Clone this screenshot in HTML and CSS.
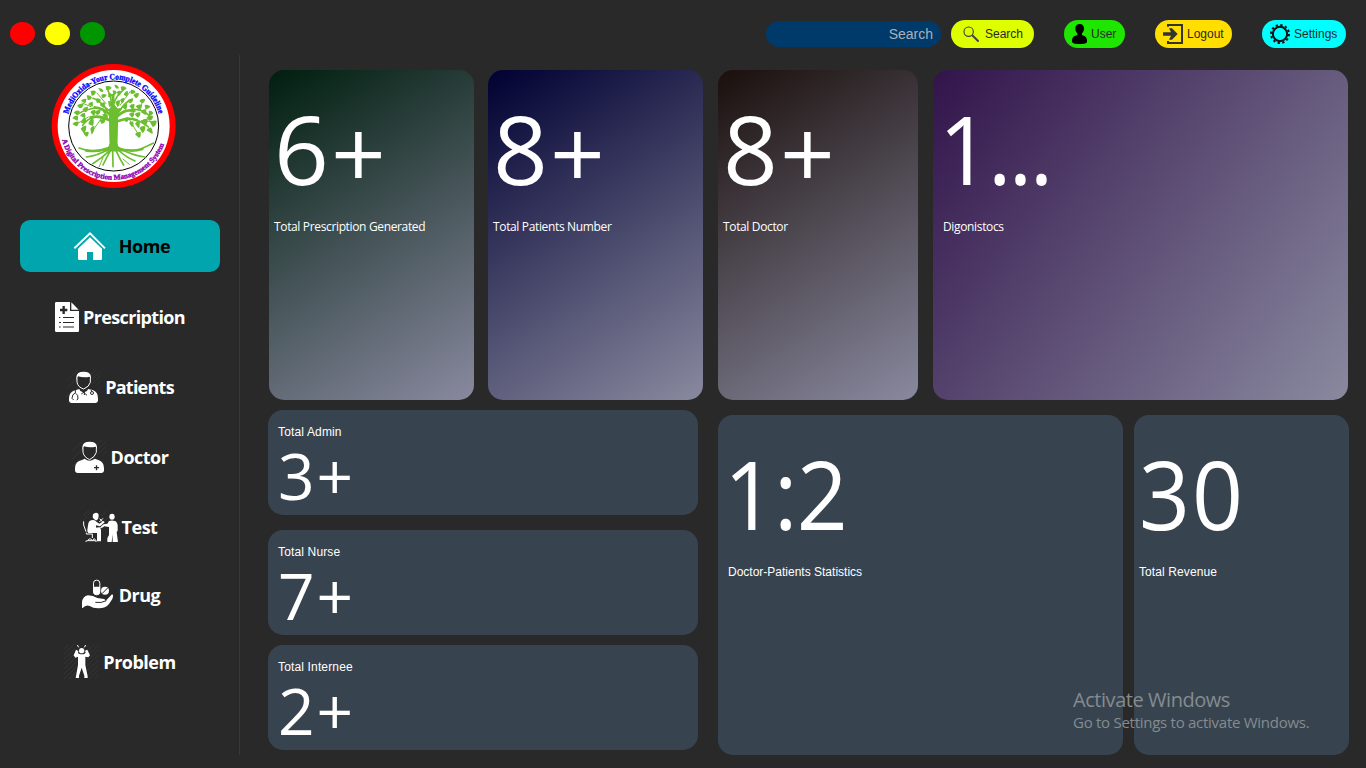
FILE: index.html
```html
<!DOCTYPE html>
<html lang="en">
<head>
<meta charset="utf-8">
<title>MediOxida</title>
<link rel="stylesheet" href="styles.css">
</head>
<body>
<div class="app">
  <header class="topbar">
    <div class="dots"><span class="dot red"></span><span class="dot yellow"></span><span class="dot green"></span></div>
    <div class="tools">
      <div class="field">Search</div>
      <button class="pill search"><svg width="16" height="16" viewBox="0 0 48 48" fill="none" stroke="#444"><circle cx="17" cy="17" r="14" stroke-width="3.5"/><path d="M27 27L47 47" stroke-width="6"/></svg><span>Search</span></button>
      <button class="pill user"><svg width="15" height="20" viewBox="0 0 45 60" fill="#000"><path d="M23 0c9 0 13 5 13 14 0 9-6 16-13 16S10 23 10 14C10 5 14 0 23 0zM16 27h14v6l9 4q6 4 6 12v4q0 7-22 7T0 53v-4q0-8 6-12l10-4z"/></svg><span>User</span></button>
      <button class="pill logout"><svg width="20" height="20" viewBox="0 0 60 60" fill="none" stroke="#333"><path d="M15 8V3H57V57H15V51" stroke-width="6"/><path d="M0 25H24L18 13H27L44 30L27 47H18L24 35H0Z" fill="#333" stroke="none"/></svg><span>Logout</span></button>
      <button class="pill settings"><svg width="20" height="20" viewBox="0 0 60 60" fill="none" stroke="#111"><circle cx="30" cy="30" r="21.5" stroke-width="6"/><circle cx="30" cy="30" r="27" stroke-width="6" stroke-dasharray="7.1 7.037"/></svg><span>Settings</span></button>
    </div>
  </header>
  <aside class="sidebar">
    <svg class="logo" width="126" height="126" viewBox="32 24 378 378">
      <defs><path id="arcTop" d="M84.500 178A140 140 0 0 1 355.500 178"/><path id="arcBottom" d="M65 254A160 160 0 0 0 375 254"/></defs>
      <circle cx="220" cy="213" r="186" fill="red"/><circle cx="220" cy="213" r="168" fill="#fff"/><circle cx="220" cy="213" r="135" fill="none" stroke="#000" stroke-width="3"/>
      <text class="ring blue"><textPath href="#arcTop" textLength="367" lengthAdjust="spacingAndGlyphs">MediOxida-Your Complete Guideline</textPath></text>
      <text class="ring purple"><textPath href="#arcBottom" textLength="408" lengthAdjust="spacingAndGlyphs">A Digital Prescription Management System</textPath></text>
      <g fill="none" stroke="#6cbe30" stroke-linecap="round" stroke-linejoin="round">
        <path d="M207 170L209 265Q206 282 190 288H250Q231 280 230 264L232 185Q233 170 245 160L232 162 221 150V118H215V152L206 165 192 154Z" fill="#6cbe30" stroke-width="3"/>
        <path stroke-width="8" d="M210 180Q190 160 163 157M231 184Q255 160 282 168M208 196Q180 180 151 187M231 199Q265 185 290 196M203 280Q170 292 137 286M230 279Q270 293 306 282"/>
        <path stroke-width="5" d="M216 162Q213 125 200 100M219 150Q228 120 248 106M200 166Q183 139 158 130M236 171Q249 145 276 132M173 159Q140 160 111 178M269 165Q301 157 327 182M169 185Q140 190 127 211M278 193Q305 198 324 216M205 283Q170 303 138 306M209 286Q184 310 157 326M217 285L218 335M211 286Q197 310 188 330M227 286Q240 315 250 330M231 282Q255 306 284 318M235 279Q275 301 314 306M140 286L116 279M303 281L340 264"/>
        <path stroke-width="3" d="M197 146L170 114M239 151L270 109M152 155L125 144M300 166L306 139M144 186L107 208M303 197L341 200M190 180L158 226M265 190L292 235M188 308L176 336M248 312L267 328"/>
      </g>
      <g class="leaves">
        <path d="M196 94q12-4 18 4-5 9-16 6zM222 89q13 1 14 11-11 4-14-11zM241 95q12-4 18 5-8 9-16 6zM174 99q12 0 16 10-10 6-16-10zM151 109q9-5 16 1-3 12-13 12zM183 120q8-6 16 0-4 11-14 8zM205 113q10 1 12 9-9 7-14 3zM229 112q8-7 14-3 0 12-8 13zM250 120q3-11 12-12 3 11-3 16zM272 104q11-1 14 8-9 8-16 3zM279 121q6-9 17-6-1 12-9 15zM297 138q5-9 17-6 0 11-9 13zM261 138q5-9 17-6 0 11-9 13zM239 136q4-8 13-7 1 13-7 16zM165 131q11-3 17 4-4 11-12 9zM139 121q11-2 16 7-5 9-13 7zM122 137q7-8 16-5 1 10-5 13zM143 148q5-8 14-8 2 12-1 15zM110 152q9-9 20-4-3 13-12 12z"/>
        <path d="M126 164q6-10 17-9 0 14-7 17zM100 173q7-9 18-5 0 11-8 12zM96 190q6-10 16-8 3 12-1 15zM119 182q6-10 15-8 3 13-1 15zM96 207q7-10 19-7 0 12-8 14zM122 205q3-14 11-18 8 11 4 18zM144 207q4-16 15-18 3 18-2 24zM121 221q6-10 17-9 0 16-7 24zM150 222q3-9 12-9 1 17-8 26zM130 237q5-8 15-6 0 13-7 14zM163 171q8-8 18-5-1 13-11 14zM178 196q8-6 17-3 0 14-12 13zM187 169q7-7 15-3 0 10-9 12zM178 150q6-9 15-8 3 15-3 17zM203 138q10-1 13 5-2 14-10 12zM225 142q6-8 14-6 0 17-8 20zM245 155q5-9 15-8 2 14-5 18zM267 154q5-9 15-7 2 14-6 17z"/>
        <path d="M286 154q7-8 18-5 0 12-10 14zM313 150q10-3 17 4-4 11-15 8zM302 172q5-10 15-10 3 15-2 18zM325 168q9-2 14 6-4 9-13 7zM318 188q8-9 20-6 0 13-11 15zM329 202q8-8 20-5 0 16-12 19zM303 198q8-9 19-6 0 17-10 20zM284 206q5-8 14-6 2 17-4 19zM266 204q5-6 13-4 2 14-4 16zM297 219q7-8 18-5 0 17-9 20zM318 226q6-10 15-8 6 15 3 19zM284 238q6-9 17-7 2 16-5 18zM266 178q5-8 15-6 2 13-6 16zM283 178q6-8 17-6 1 13-8 16zM249 193q5-8 15-6 2 12-6 15zM202 189q-13-2-16-11 13-5 17 4zM150 172q5-9 15-7 2 14-5 17zM217 106q10 0 12 7-7 9-9 9z"/>
      </g>
    </svg>
    <nav class="nav">
      <a class="item home"><svg width="40" height="40" viewBox="210 48 120 120"><path class="hatch faint" d="M210 80L242 48M210 110L268 52M210 140L232 118M212 166L240 138M300 80L330 50M312 96L330 78M310 140L330 120"/><path d="M223 115L270 70L315 115" fill="none" stroke="#fff" stroke-width="6"/><path fill="#fff" d="M234 116L270 82 306 116V146q0 4-4 4H279V126H261V150H238q-4 0-4-4z"/></svg><span>Home</span></a>
      <a class="item prescription"><svg width="24" height="30" viewBox="165 276 72 90"><path fill="#fff" d="M169 276H210V303H237V362q0 4-4 4H169q-4 0-4-4V280q0-4 4-4zM214 277L236 299H214z"/><path d="M189 322.500H222M189 337.500H222M189 351H222M177 322.500h4M177 337.500h6M177 351h5" stroke="#292929" stroke-width="3"/><path d="M191 288V312M180 300H202" stroke="#292929" stroke-width="7"/></svg><span>Prescription</span></a>
      <a class="item patients"><svg width="35" height="35" viewBox="78 90 105 105"><path class="hatch" d="M78 125L113 90M78 148L136 90M78 171L101 148M80 192L87 186M152 105L167 90M156 118L183 91M157 132L183 106M166 139L183 122M171 151L183 139"/><path fill="#fff" d="M109 120V111Q110 95 131 95T153 111V120L149 110Q131 114 114 109z"/><path d="M111 115V127Q114 142 131 147Q148 140 151 127V115" fill="none" stroke="#fff" stroke-width="3"/><path fill="#fff" d="M87 183V174Q88 154 108 150L118 147 121 153 131 157 141 153 144 147 158 150Q174 155 174 175V183Q172 189 166 189H95Q89 189 87 183z"/><path d="M106 149V159Q96 162 96 175L101 180M107 160Q115 163 114 177L110 180M154 150V154M133 152V165M121 148L141 166M142 148L124 162" fill="none" stroke="#292929" stroke-width="3"/><circle cx="156" cy="159" r="4.500" fill="none" stroke="#292929" stroke-width="3"/></svg><span>Patients</span></a>
      <a class="item doctor"><svg width="35" height="35" viewBox="93 300 105 105"><path class="hatch" d="M93 335L128 300M93 358L126 325M93 381L115 359M167 315L182 300M171 328L198 301M172 342L198 316M181 349L198 332"/><path fill="#fff" d="M124 330V321Q125 305 146 305T168 321V330L164 320Q146 324 129 319z"/><path d="M126 325V337Q129 352 146 359Q163 350 166 337V325" fill="none" stroke="#fff" stroke-width="3"/><path fill="#fff" d="M102 393V384Q103 363 123 360L131 356Q145 368 161 356L172 360Q189 365 189 385V393Q187 399 181 399H110Q104 399 102 393z"/><path d="M159 383H174M166.500 376V391" stroke="#292929" stroke-width="4"/></svg><span>Doctor</span></a>
      <a class="item test"><svg width="35" height="35" viewBox="129 60 105 105"><path class="hatch" d="M129 78L147 60M130 89L159 60M185 78L202 61M190 97L207 80M207 163L234 136M220 165L234 151"/><g fill="#fff"><path d="M159 73q4-5 9-5 8 0 8 8l-1 9q-3 7-8 6t-9-9zM153 91q11-4 16 4l9 6 13-8 3 4-14 12-12-3v7h11q4 2 4 7v34H171V129H145q-4-4-3-10l3-19q2-7 8-9z"/><ellipse cx="216" cy="80" rx="8" ry="9"/><path d="M207 93q9-3 18 0 8 4 8 15v14l-3 4 4 30H218V133l-3 23H202V145l5-10V111l-15-2-7 5-2-5 8-6 11-2z"/></g><path d="M131 94V105L138 125M139 128V132H157V144M139 152H167M138 156v-3M144 150l6-4 7 5 6-5 5 6v4M178 96l11-11M179 86l10 11M168 115l16-2 10-7" fill="none" stroke="#fff" stroke-width="3"/></svg><span>Test</span></a>
      <a class="item drug"><svg width="35" height="35" viewBox="117 265 105 105"><rect x="157.500" y="274.500" width="19" height="44" rx="9" fill="none" stroke="#fff" stroke-width="3"/><path d="M157 294H177V309q0 9-10 9t-10-9z" fill="#fff"/><circle cx="192" cy="306" r="12" fill="#fff"/><path d="M183 315L201 297" stroke="#292929" stroke-width="3"/><path fill="#fff" d="M123 358V341Q125 323 141 320 156 320 169 328L184 330Q195 331 193 338L213 317Q219 318 214 331L204 346Q193 360 171 359 156 359 146 352 135 347 125 358z"/><path d="M163 341Q181 344 196 336" fill="none" stroke="#292929" stroke-width="3"/></svg><span>Drug</span></a>
      <a class="item problem"><svg width="35" height="35" viewBox="75 465 105 105"><path class="hatch" d="M75 480L90 465M75 495L105 465M75 510L107 478M75 525L105 495M75 540L115 500M75 555L115 515M75 570L112 533M90 570L112 548M136 480L151 465M148 483L166 465M153 493L180 466M146 515L180 481M144 532L180 496M145 546L180 511M147 559L180 526M151 570L180 541M166 570L180 556"/><g fill="#fff"><ellipse cx="128" cy="485" rx="8" ry="8"/><path d="M104 499L111 482 118 486 117 493 124 496H135L140 491 138 485 145 482 153 499 148 505 139 503V528L146 562V567H136V560L128 536 120 560V567H110L117 528V503L109 506z"/></g><path d="M119 475l-4-7M136 475l4-7" stroke="#fff" stroke-width="3"/></svg><span>Problem</span></a>
    </nav>
  </aside>
  <main class="main">
    <section class="top">
      <article class="card c1"><div class="big">6<span class="plus">+</span></div><p>Total Prescription Generated</p></article>
      <article class="card c2"><div class="big">8<span class="plus">+</span></div><p>Total Patients Number</p></article>
      <article class="card c3"><div class="big">8<span class="plus">+</span></div><p>Total Doctor</p></article>
      <article class="card c4"><div class="big narrow one"><span class="digit">1</span>...</div><p>Digonistocs</p></article>
    </section>
    <section class="bottom">
      <div class="stack">
        <article class="row admin"><p>Total Admin</p><div class="mid">3+</div></article>
        <article class="row nurse"><p>Total Nurse</p><div class="mid">7+</div></article>
        <article class="row"><p>Total Internee</p><div class="mid">2+</div></article>
      </div>
      <article class="card flat ratio"><div class="big narrow odds">1:2</div><p>Doctor-Patients Statistics</p></article>
      <article class="card flat revenue"><div class="big narrow">30</div><p>Total Revenue</p></article>
    </section>
  </main>
  <div class="watermark"><div class="wm1">Activate Windows</div><div class="wm2">Go to Settings to activate Windows.</div></div>
</div>
</body>
</html>
```
FILE: styles.css
```css
* { box-sizing: border-box; }
body { margin: 0; background: #292929; overflow: hidden; }
p { margin: 0; }
.app { position: relative; width: 1366px; height: 768px; display: grid; grid-template: 55px 1fr / 240px 1fr; font-family: "Open Sans", "Noto Sans", sans-serif; color: #fff; }
.topbar { grid-column: 1 / 3; display: flex; justify-content: space-between; padding: 20px 20px 0 10px; }
.dots { display: flex; gap: 10px; padding-top: 2px; }
.dot { width: 25px; height: 23px; border-radius: 50%; }
.red { background: #f00; }
.yellow { background: #ff0; }
.green { background: #009600; }
.tools { display: flex; align-items: flex-start; font-family: "Liberation Sans", Arial, sans-serif; }
.field { width: 175px; height: 26px; margin: 1px 10px 0 0; border-radius: 13px; background: #003a6b; color: #a9b1b8; font-size: 14px; line-height: 26px; text-align: right; padding-right: 8px; }
.pill { height: 28px; border: 0; border-radius: 14px; padding: 0; display: flex; align-items: center; font: 12px "Liberation Sans", Arial, sans-serif; color: #292929; }
.pill.search { width: 83px; background: #df0; padding-left: 12px; gap: 6px; margin-right: 30px; }
.pill.user { width: 61px; background: #1ee600; padding-left: 8px; gap: 4px; margin-right: 30px; }
.pill.logout { width: 77px; background: #ffde00; padding-left: 8px; gap: 4px; margin-right: 30px; }
.pill.settings { width: 84px; background: #0ff; padding-left: 8px; gap: 4px; }
.sidebar { height: 700px; border-right: 1px solid #990050; padding-top: 8px; }
.logo { display: block; margin-left: 50.500px; }
.ring { font-family: "Liberation Serif", serif; font-weight: 700; font-size: 25px; stroke-width: 1; }
.blue { fill: #00f; stroke: #00f; }
.purple { fill: #8c00b4; stroke: #8c00b4; font-size: 22px; }
.leaves { fill: #6cbe30; }
.nav { margin-top: 31px; display: flex; flex-direction: column; width: 240px; }
.item { height: 70px; display: flex; align-items: center; justify-content: center; gap: 4px; font-size: 18px; font-weight: 700; line-height: 24px; letter-spacing: -0.5px; }
.item.home { width: 200px; height: 52px; margin: 0 0 10px 20px; border-radius: 10px; background: #00a5ad; color: #000; gap: 9px; letter-spacing: -0.4px; }
.item.prescription { letter-spacing: -0.65px; }
.item.patients { letter-spacing: -0.75px; }
.item.drug, .item.problem { height: 67px; }
.item.drug { margin-top: -1px; }
.hatch { fill: none; stroke: #3b3b3b; stroke-width: 2; }
.hatch.faint { stroke: #10aab2; }
.main { padding: 15px 17px 0 28px; }
.top { display: flex; height: 330px; padding-left: 1px; }
.card { border-radius: 15px; padding: 32px 5px 0; }
.c1 { width: 205px; margin-right: 14px; background: linear-gradient(148.200deg, #001e0f, #89899f); }
.c2 { width: 215px; margin-right: 15px; background: linear-gradient(146.900deg, #000032, #89899f); }
.c3 { width: 200px; margin-right: 15px; background: linear-gradient(148.800deg, #1a0f0c, #89899f); }
.c4 { width: 415px; padding-left: 10px; background: linear-gradient(128.500deg, #32144b, #89899f); }
.big { height: 108px; line-height: 92px; font-size: 96px; letter-spacing: 2px; white-space: nowrap; }
.plus { display: inline-block; vertical-align: -4px; line-height: 84px; }
.narrow { transform: scaleX(0.93); transform-origin: left; }
.one { margin-left: -4px; letter-spacing: -2.700px; }
.digit { letter-spacing: -2.300px; }
.odds { margin-left: -4px; letter-spacing: -1px; }
.card p { font-size: 12px; line-height: 16px; margin-top: 9px; letter-spacing: -0.350px; }
.bottom { display: flex; padding-top: 10px; }
.stack { width: 430px; margin-right: 20px; }
.row { height: 105px; border-radius: 15px; background: #37444f; padding: 14px 10px 0; }
.row p { font: 12px/16px "Liberation Sans", Arial, sans-serif; letter-spacing: 0.150px; }
.mid { font-size: 64px; line-height: 72px; letter-spacing: 2px; }
.admin { margin-bottom: 15px; }
.nurse { margin-bottom: 10px; }
.flat { background: #37444f; height: 340px; margin-top: 5px; }
.card.flat p { font-family: "Liberation Sans", Arial, sans-serif; letter-spacing: 0; }
.ratio { width: 405px; margin-right: 11px; padding-left: 10px; }
.revenue { width: 215px; }
.card.revenue p { letter-spacing: 0.100px; }
.watermark { position: absolute; left: 1073px; top: 688px; color: #858b90; white-space: nowrap; }
.wm1 { font-size: 20px; line-height: 24px; letter-spacing: -0.450px; }
.wm2 { font-size: 15px; line-height: 20px; letter-spacing: -0.270px; }
```
